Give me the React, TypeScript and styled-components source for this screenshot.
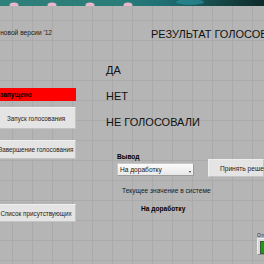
import styled, { createGlobalStyle } from "styled-components";

/*
    Voting control panel (LabVIEW-like front panel)
    grid background, status bar, buttons, result list, output selector
*/

const GlobalStyle = createGlobalStyle`
    html, body {
        margin: 0;
        padding: 0;
        background: #b5b5b5;
        overflow: hidden;
    }
    * {
        box-sizing: border-box;
    }
`

const Screen = styled.div`
    width: 264px;
    height: 264px;
    display: flex;
    flex-direction: column;
    overflow: hidden;
    font-family: "Liberation Sans", Arial, sans-serif;
    color: #111;
`

const Banner = styled.div`
    height: 6px;
    flex: none;
    line-height: 0;
`

const Panel = styled.div`
    flex: 1;
    display: flex;
    background-color: #b5b5b5;
    background-image:
        linear-gradient(to right, #aaaaaa 1px, transparent 1px),
        linear-gradient(to bottom, #aaaaaa 1px, transparent 1px);
    background-size: 20px 20px;
    background-position: 12px 14px;
    overflow: hidden;
`

const LeftColumn = styled.div`
    flex: none;
    width: 80px;
    margin-left: -4px;
    display: flex;
    flex-direction: column;
`

const VersionLine = styled.div`
    margin-top: 22px;
    width: 56px;
    height: 9px;
    font-size: 6.6px;
    line-height: 9px;
    white-space: nowrap;
    overflow: hidden;
    display: flex;
    justify-content: flex-end;
    color: #1a1a1a;
`

const StatusBar = styled.div`
    margin-top: 51px;
    height: 13px;
    background: #ff0000;
    padding-left: 4px;
    font-size: 6.6px;
    font-weight: 700;
    line-height: 13px;
    white-space: nowrap;
    color: #000;
`

const PanelButton = styled.div<{$h: number, $top: number}>`
    margin-top: ${props => props.$top}px;
    height: ${props => props.$h}px;
    background: #e4e4e4;
    border-top: 1px solid #efefef;
    border-left: 1px solid #efefef;
    border-right: 1px solid #c4c4c4;
    border-bottom: 1px solid #c4c4c4;
    display: flex;
    align-items: center;
    justify-content: center;
    font-size: 6.3px;
    white-space: nowrap;
    color: #222;
`

const MainColumn = styled.div`
    flex: 1;
    min-width: 0;
    margin-left: 30px;
    display: flex;
    flex-direction: column;
`

const Title = styled.div`
    margin-top: 21px;
    margin-left: 45px;
    font-size: 11px;
    line-height: 14px;
    white-space: nowrap;
    color: #111;
`

const VoteList = styled.div`
    margin-top: 22px;
    display: flex;
    flex-direction: column;
    gap: 12px;
`

const VoteItem = styled.div`
    font-size: 11px;
    line-height: 14px;
    white-space: nowrap;
    color: #111;
`

const OutputRow = styled.div`
    margin-top: 23px;
    margin-left: 11px;
    display: flex;
    align-items: flex-start;
`

const OutputField = styled.div`
    width: 90px;
    display: flex;
    flex-direction: column;
    gap: 2px;
`

const FieldLabel = styled.div`
    font-size: 6.6px;
    font-weight: 700;
    line-height: 9px;
    color: #000;
`

const SelectBox = styled.div`
    height: 13px;
    background: linear-gradient(#fbfbfb, #e8e8e8);
    border: 1px solid #9c9c9c;
    border-top-color: #c8c8c8;
    border-left-color: #c8c8c8;
    display: flex;
    align-items: center;
    justify-content: space-between;
    padding: 0 2px;
    font-size: 6.6px;
    color: #111;
`

const SelectArrow = styled.span`
    width: 0;
    height: 0;
    margin-top: 4px;
    border-left: 1.5px solid transparent;
    border-right: 1.5px solid transparent;
    border-top: 2px solid #333;
`

const AcceptButton = styled(PanelButton)`
    width: 56px;
    flex: none;
    margin-left: 14px;
    justify-content: flex-start;
    padding-left: 11px;
    font-size: 6.6px;
`

const CurrentLabel = styled.div`
    margin-top: 9px;
    margin-left: 16px;
    font-size: 6.6px;
    line-height: 9px;
    color: #1a1a1a;
    white-space: nowrap;
`

const CurrentValue = styled.div`
    margin-top: 9px;
    margin-left: 35px;
    font-size: 6.6px;
    font-weight: 700;
    line-height: 9px;
    color: #000;
    white-space: nowrap;
`

const IndicatorRow = styled.div`
    margin-top: 19px;
    display: flex;
    justify-content: flex-end;
`

const Indicator = styled.div`
    width: 14px;
    margin-right: -7px;
    display: flex;
    flex-direction: column;
`

const IndicatorLabel = styled.div`
    font-size: 5px;
    line-height: 6px;
    height: 6px;
    color: #333;
    white-space: nowrap;
    overflow: hidden;
`

const Lamp = styled.div<{$on: boolean}>`
    height: 17px;
    background: #d8d8d8;
    border: 1px solid #8e8e8e;
    border-top-color: #eeeeee;
    border-left-color: #eeeeee;
    padding: 2px;

    &::after {
        content: "";
        display: block;
        height: 100%;
        background: ${props => props.$on ? "#12a012" : "#0b3d0b"};
        border: 1px solid #3a5a3a;
    }
`

// ~~~~~~~~~~~~~~~~~~~~~~~~~~~~~~~~~~~~~~~~~~~~~~~~~~~~~~~~~~~~~~

function BannerArt() {
    // piece of the wallpaper behind the window
    return (
        <svg width="264" height="6" viewBox="0 0 264 6">
            <defs>
                <linearGradient id="sea" x1="0" y1="0" x2="1" y2="0">
                    <stop offset="0" stopColor="#2f7f7a" />
                    <stop offset="0.45" stopColor="#2a7d78" />
                    <stop offset="0.62" stopColor="#1f6f74" />
                    <stop offset="0.8" stopColor="#184c4c" />
                    <stop offset="1" stopColor="#0e2a2a" />
                </linearGradient>
            </defs>
            <rect width="264" height="6" fill="url(#sea)" />
            {[14, 52, 90, 128].map(x => (
                <ellipse key={x} cx={x} cy="5" rx="4.5" ry="2.5" fill="#e9b6cc" />
            ))}
            <ellipse cx="190" cy="2" rx="14" ry="3" fill="#2a8f9a" opacity="0.7" />
        </svg>
    )
}

export default function App() {
    const votes = ["ДА", "НЕТ", "НЕ ГОЛОСОВАЛИ"];

    return (
        <>
        <GlobalStyle />
        <Screen>
            <Banner><BannerArt /></Banner>
            <Panel>
                <LeftColumn>
                    <VersionLine>Редакция новой версии '12</VersionLine>
                    <StatusBar>запущено</StatusBar>
                    <PanelButton $h={22} $top={6}>Запуск голосования</PanelButton>
                    <PanelButton $h={19} $top={11}>Завершение голосования</PanelButton>
                    <PanelButton $h={18} $top={45}>Список присутствующих</PanelButton>
                </LeftColumn>

                <MainColumn>
                    <Title>РЕЗУЛЬТАТ ГОЛОСОВАНИЯ</Title>
                    <VoteList>
                        {votes.map((v) => <VoteItem key={v}>{v}</VoteItem>)}
                    </VoteList>

                    <OutputRow>
                        <OutputField>
                            <FieldLabel>Вывод</FieldLabel>
                            <SelectBox>
                                <span>На доработку</span>
                                <SelectArrow />
                            </SelectBox>
                        </OutputField>
                        <AcceptButton $h={18} $top={7}>Принять решение</AcceptButton>
                    </OutputRow>

                    <CurrentLabel>Текущее значение в системе</CurrentLabel>
                    <CurrentValue>На доработку</CurrentValue>

                    <IndicatorRow>
                        <Indicator>
                            <IndicatorLabel>Отправлено</IndicatorLabel>
                            <Lamp $on={true} />
                        </Indicator>
                    </IndicatorRow>
                </MainColumn>
            </Panel>
        </Screen>
        </>
    )
}
